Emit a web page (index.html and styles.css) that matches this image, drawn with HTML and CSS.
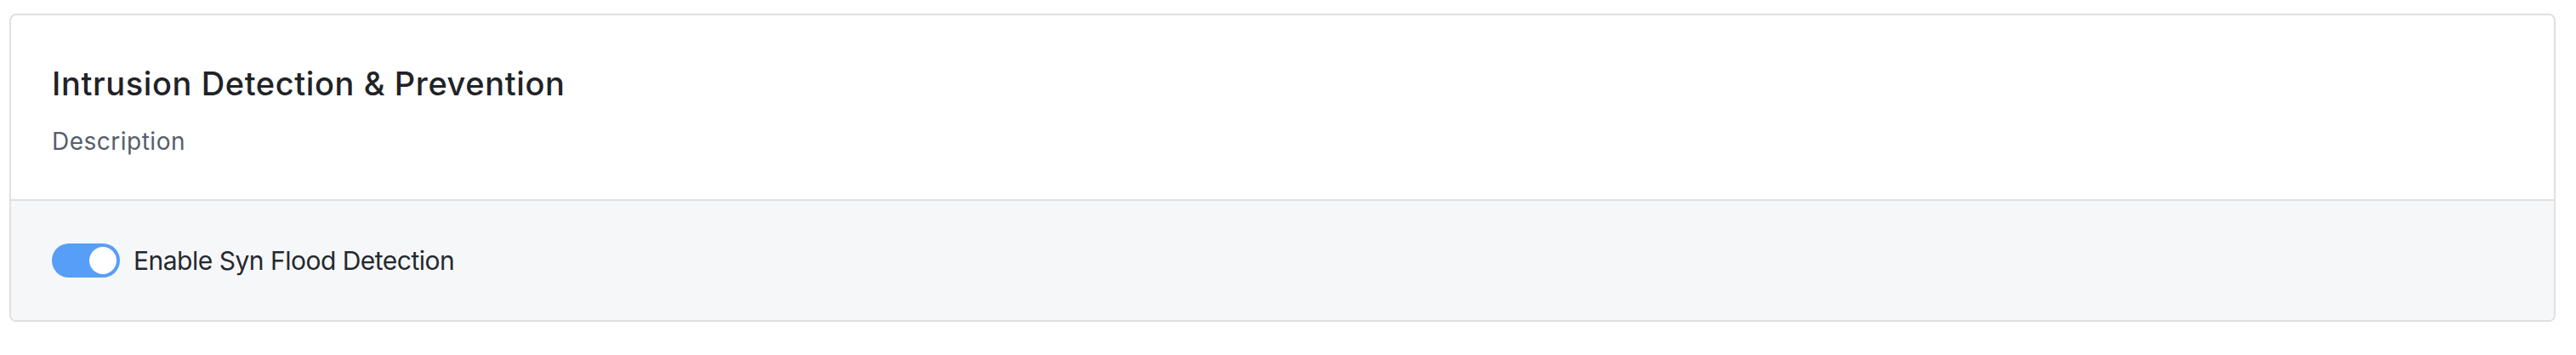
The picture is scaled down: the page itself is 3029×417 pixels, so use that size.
FILE: index.html
```html
<!DOCTYPE html>
<html lang="en">

<head>
    <meta charset="UTF-8">
    <meta name="viewport" content="width=device-width, initial-scale=1.0">
    <title>Intrusion Detection</title>
    <link rel="stylesheet" href="styles.css">
</head>

<body>

    <div class="card">
        <div class="card-head">
            <h3>Intrusion Detection &amp; Prevention</h3>
            <p>Description</p>
        </div>

        <div class="card-body">
            <label class="switch-row">
                <span class="switch on"><span class="knob"></span></span>
                <span class="label">Enable Syn Flood Detection</span>
            </label>
        </div>
    </div>

</body>

</html>
```

FILE: styles.css
```css
* {
    margin: 0;
    padding: 0;
    box-sizing: border-box;
    font-family: Inter, "Noto Sans", sans-serif;
}

body {
    background-color: #fff;
    padding: 16px 24px 0 11px;
}

.card {
    border: 2px solid #e0e0e0;
    border-radius: 8px;
    overflow: hidden;
}

.card-head {
    padding: 48px;
    display: flex;
    flex-direction: column;
    gap: 16px;
}

.card-head h3 {
    font-size: 38px;
    line-height: 64px;
    font-weight: 450;
    letter-spacing: 0.6px;
    color: #1f2328;
}

.card-head p {
    font-size: 28px;
    line-height: 40px;
    letter-spacing: 0.5px;
    color: #555e6b;
}

.card-body {
    background-color: #f6f7f9;
    border-top: 2px solid #e0e0e0;
    padding: 48px;
}

.switch-row {
    display: flex;
    align-items: center;
    gap: 16px;
    height: 44px;
}

.switch {
    width: 80px;
    height: 40px;
    border-radius: 20px;
    background-color: #d1d5db;
    padding: 4px;
    display: flex;
}

.switch.on {
    background-color: #579ef8;
    justify-content: flex-end;
}

.switch .knob {
    width: 32px;
    height: 32px;
    border-radius: 50%;
    background-color: #fff;
}

.switch-row .label {
    font-size: 30px;
    letter-spacing: -0.5px;
    color: #24292f;
}
```
